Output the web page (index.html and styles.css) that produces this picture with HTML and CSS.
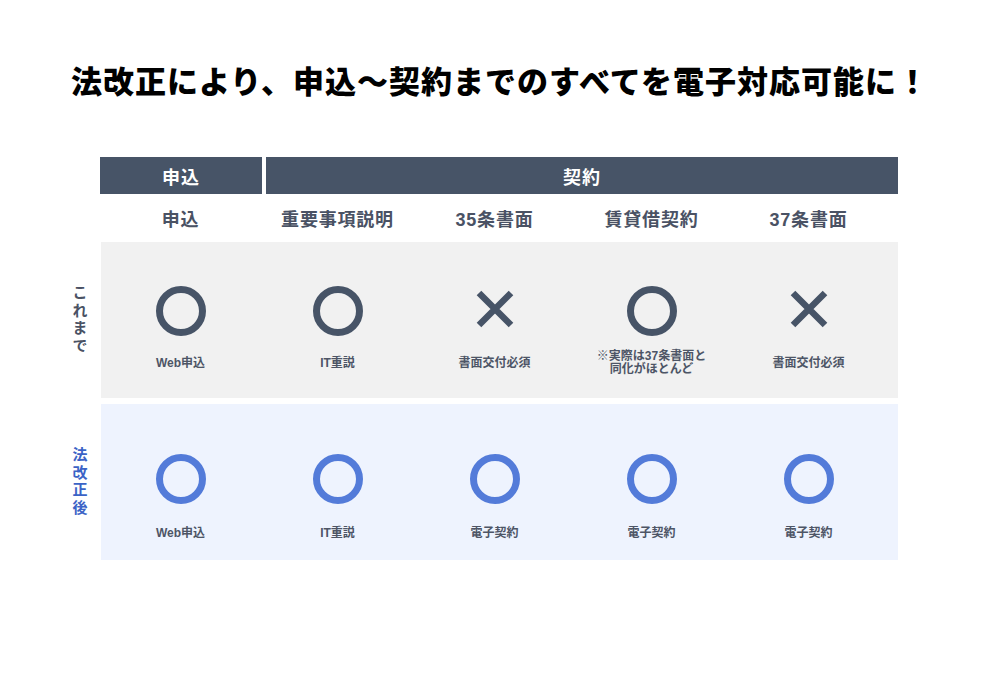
FILE: index.html
```html
<!DOCTYPE html>
<html lang="ja">
<head>
<meta charset="utf-8">
<title>法改正により電子対応可能に</title>
<link rel="stylesheet" href="styles.css">
</head>
<body>
<h1 class="title">法改正により、申込～契約までのすべてを電子対応可能に！</h1>
<div class="table">
  <div class="spacer"></div>
  <div class="head">
    <div class="bar bar-apply">申込</div>
    <div class="bar bar-contract">契約</div>
  </div>

  <div class="spacer"></div>
  <div class="subhead">
    <div>申込</div>
    <div>重要事項説明</div>
    <div>35条書面</div>
    <div>賃貸借契約</div>
    <div>37条書面</div>
  </div>

  <div class="side side-before">これまで</div>
  <div class="row row-before">
    <div class="cell"><span class="mark ring"></span><div class="note">Web申込</div></div>
    <div class="cell"><span class="mark ring"></span><div class="note">IT重説</div></div>
    <div class="cell"><svg class="mark cross" viewBox="0 0 40 40"><path d="M4 4L36 36M36 4L4 36"/></svg><div class="note">書面交付必須</div></div>
    <div class="cell"><span class="mark ring"></span><div class="note">※実際は37条書面と<br>同化がほとんど</div></div>
    <div class="cell"><svg class="mark cross" viewBox="0 0 40 40"><path d="M4 4L36 36M36 4L4 36"/></svg><div class="note">書面交付必須</div></div>
  </div>

  <div class="gap"></div>
  <div class="gap"></div>

  <div class="side side-after">法改正後</div>
  <div class="row row-after">
    <div class="cell"><span class="mark ring"></span><div class="note">Web申込</div></div>
    <div class="cell"><span class="mark ring"></span><div class="note">IT重説</div></div>
    <div class="cell"><span class="mark ring"></span><div class="note">電子契約</div></div>
    <div class="cell"><span class="mark ring"></span><div class="note">電子契約</div></div>
    <div class="cell"><span class="mark ring"></span><div class="note">電子契約</div></div>
  </div>
</div>
</body>
</html>
```

FILE: styles.css
```css
* { box-sizing: border-box; }
html, body { margin: 0; padding: 0; background: #ffffff; }
body {
  width: 1000px;
  height: 694px;
  font-family: "Liberation Sans", "Noto Sans CJK JP", sans-serif;
  color: #4a5568;
}
.title {
  margin: 0;
  padding-top: 61px;
  height: 157px;
  font-size: 31px;
  line-height: 38px;
  font-weight: 900;
  letter-spacing: 1px;
  color: #000000;
  text-align: center;
  font-family: "Noto Sans CJK JP", sans-serif;
}
.table {
  margin-left: 60px;
  display: grid;
  grid-template-columns: 40px 798px;
}
.head {
  display: grid;
  grid-template-columns: 162px 1fr;
  column-gap: 4px;
  height: 37px;
}
.bar {
  background: #475467;
  color: #ffffff;
  font-size: 18px;
  font-weight: 700;
  letter-spacing: 1px;
  display: flex;
  align-items: center;
  justify-content: center;
  font-family: "Noto Sans CJK JP", sans-serif;
}
.subhead {
  display: grid;
  grid-template-columns: repeat(5, 157px);
  padding-left: 2px;
  height: 48px;
  align-items: center;
  font-size: 18px;
  font-weight: 700;
  letter-spacing: 0.8px;
  color: #4a5264;
}
.subhead div { text-align: center; }
.side {
  writing-mode: vertical-rl;
  text-orientation: upright;
  font-size: 15px;
  font-weight: 700;
  letter-spacing: 2.5px;
  display: flex;
  align-items: center;
  justify-content: center;
  font-family: "Noto Sans CJK JP", sans-serif;
}
.side-before { color: #4a5264; }
.side-after { color: #3b63c6; }
.row {
  margin-left: 1px;
  height: 156px;
  display: grid;
  grid-template-columns: repeat(5, 157px);
  padding-left: 1px;
}
.row-before { background: #f1f1f1; padding-top: 44px; }
.row-after { background: #eef3fe; padding-top: 50px; }
.row-after .note { margin-top: 12px; }
.gap { height: 6px; }
.cell {
  display: flex;
  flex-direction: column;
  align-items: center;
}
.mark {
  display: block;
  width: 50px;
  height: 50px;
}
.ring {
  border-radius: 50%;
  border: 7.5px solid #475467;
}
.row-after .ring { border-color: #537bd9; }
.cross {
  width: 50px;
  height: 50px;
  padding: 3px 5px 7px 5px;
}
.cross path {
  stroke: #475467;
  stroke-width: 6.5;
  fill: none;
}
.note {
  margin-top: 10px;
  height: 34px;
  display: flex;
  align-items: center;
  justify-content: center;
  text-align: center;
  font-size: 12px;
  line-height: 13px;
  font-weight: 700;
  color: #4d5566;
}
```
